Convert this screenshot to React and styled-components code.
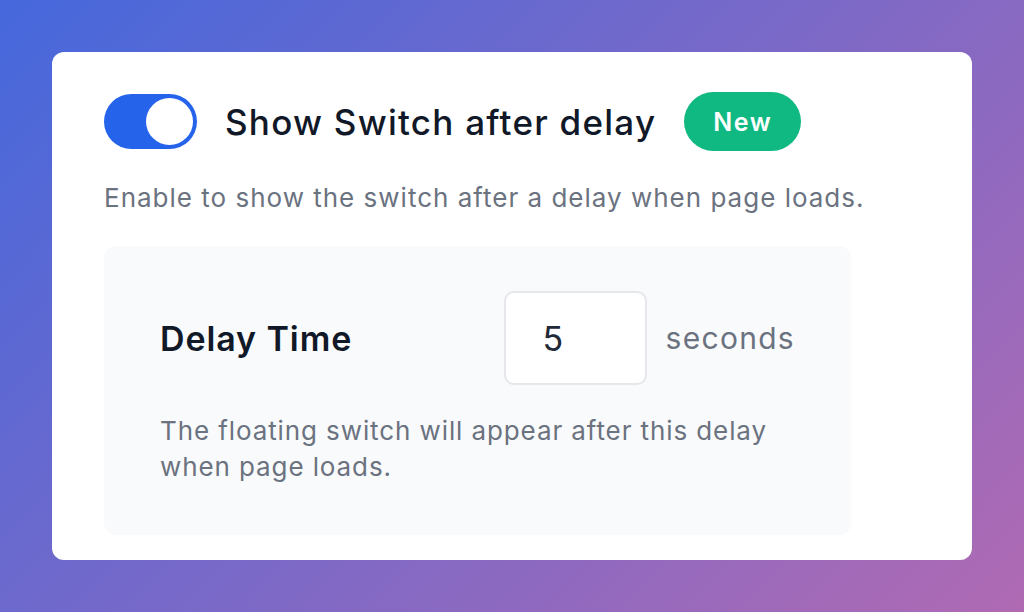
import React, { useState } from 'react';
import styled, { createGlobalStyle } from 'styled-components';

const GlobalStyle = createGlobalStyle`
  html, body {
    margin: 0;
    padding: 0;
    height: 100%;
  }
  body {
    font-family: Inter, 'Noto Sans', sans-serif;
    background: linear-gradient(135deg, #4568dc 0%, #b06ab3 100%);
    min-height: 612px;
  }
`;

const Page = styled.div`
  padding: 52px;
  box-sizing: border-box;
  width: 1024px;
  height: 612px;
`;

const Card = styled.div`
  box-sizing: border-box;
  width: 920px;
  height: 508px;
  background: #ffffff;
  border-radius: 12px;
  padding: 40px 52px 25px;
`;

const Header = styled.div`
  display: flex;
  align-items: center;
  gap: 28px;
`;

const Toggle = styled.button`
  position: relative;
  width: 93px;
  height: 55px;
  border: none;
  padding: 0;
  border-radius: 28px;
  background: ${({ on }) => (on ? '#2563eb' : '#d1d5db')};
  cursor: pointer;
  flex-shrink: 0;
`;

const Knob = styled.span`
  position: absolute;
  top: 4px;
  left: ${({ on }) => (on ? '42px' : '4px')};
  width: 47px;
  height: 47px;
  border-radius: 50%;
  background: #ffffff;
  transition: left 0.2s;
`;

const Title = styled.h2`
  margin: 0;
  font-size: 35px;
  font-weight: 500;
  color: #111827;
  letter-spacing: 1.25px;
`;

const Badge = styled.span`
  display: inline-flex;
  align-items: center;
  justify-content: center;
  width: 117px;
  height: 59px;
  border-radius: 30px;
  background: #10b981;
  color: #ffffff;
  font-size: 25px;
  font-weight: 600;
  letter-spacing: 1.5px;
`;

const Description = styled.p`
  margin: 31px 0 33px;
  font-size: 26px;
  letter-spacing: 1px;
  color: #6b7280;
`;

const Settings = styled.div`
  box-sizing: border-box;
  width: 747px;
  height: 289px;
  background: #f9fafb;
  border-radius: 12px;
  padding: 45px 56px;
`;

const Row = styled.div`
  display: flex;
  align-items: center;
  justify-content: space-between;
`;

const Label = styled.span`
  font-size: 34px;
  font-weight: 600;
  letter-spacing: 0.9px;
  color: #111827;
`;

const InputGroup = styled.div`
  display: flex;
  align-items: center;
  gap: 19px;
`;

const NumberInput = styled.input`
  box-sizing: border-box;
  width: 143px;
  height: 94px;
  border: 2px solid #e5e7eb;
  border-radius: 10px;
  background: #ffffff;
  padding: 0 0 0 37px;
  font-family: Inter, 'Noto Sans', sans-serif;
  font-size: 34px;
  color: #1f2937;
  outline: none;
`;

const Unit = styled.span`
  font-size: 30px;
  letter-spacing: 1.3px;
  color: #6b7280;
`;

const Help = styled.p`
  margin: 28px 0 0;
  max-width: 640px;
  font-size: 26px;
  line-height: 36px;
  letter-spacing: 0.9px;
  color: #6b7280;
`;

export default function App() {
  const [enabled, setEnabled] = useState(true);
  const [delay, setDelay] = useState('5');

  return (
    <>
      <GlobalStyle />
      <Page>
        <Card>
          <Header>
            <Toggle type="button" on={enabled ? 1 : 0} onClick={() => setEnabled(!enabled)}>
              <Knob on={enabled ? 1 : 0} />
            </Toggle>
            <Title>Show Switch after delay</Title>
            <Badge>New</Badge>
          </Header>
          <Description>Enable to show the switch after a delay when page loads.</Description>
          <Settings>
            <Row>
              <Label>Delay Time</Label>
              <InputGroup>
                <NumberInput value={delay} onChange={(e) => setDelay(e.target.value)} />
                <Unit>seconds</Unit>
              </InputGroup>
            </Row>
            <Help>The floating switch will appear after this delay when page loads.</Help>
          </Settings>
        </Card>
      </Page>
    </>
  );
}
